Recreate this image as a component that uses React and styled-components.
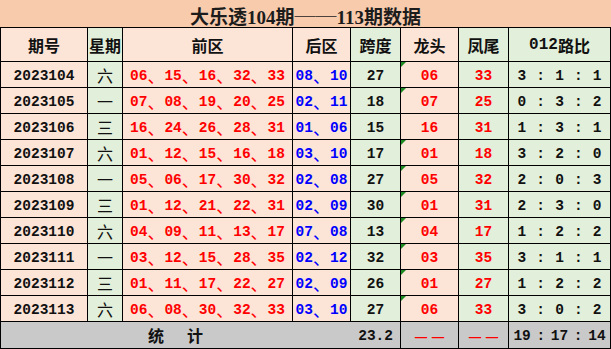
import React from "react";
import styled, { createGlobalStyle } from "styled-components";

const Global = createGlobalStyle`
  html, body { margin: 0; padding: 0; background: #fff; }
`;

const MONO = `"Liberation Mono", "Noto Sans CJK SC", monospace`;
const CJK = `"Noto Sans CJK SC", sans-serif`;

const tones = { pink: "#fce4d6", green: "#e2efda", gray: "#c9c9c9" };
const inks = { black: "#111", red: "#ff0000", blue: "#0000ff" };

const Page = styled.div`
  width: 611px;
`;

const Title = styled.div`
  box-sizing: border-box;
  height: 27px;
  padding-top: 3px;
  background: #f8cbad;
  display: flex;
  align-items: center;
  justify-content: center;
  font-family: "Liberation Serif", "Noto Sans CJK SC", serif;
  font-weight: bold;
  font-size: 19px;
  color: #1c1c1c;
  white-space: nowrap;
`;

const TitleDash = styled.span`
  font-family: ${CJK};
  font-weight: bold;
  font-size: 21px;
  line-height: 1;
`;

const Grid = styled.div`
  display: grid;
  grid-template-columns: 86px 34px 169px 57px 49px 57px 49px 101px;
  grid-template-rows: 33px repeat(10, 25px) 26px;
  gap: 1px;
  background: #000;
  border: 1px solid #000;
`;

const Cell = styled.div`
  position: relative;
  box-sizing: border-box;
  padding-top: 2px;
  background: ${(p) => tones[p.$tone || "pink"]};
  color: ${(p) => inks[p.$ink || "black"]};
  display: flex;
  align-items: center;
  justify-content: center;
  font-family: ${MONO};
  font-weight: bold;
  font-size: 14.5px;
  white-space: nowrap;
  overflow: hidden;
  ${(p) =>
    p.$flag &&
    `&::before {
      content: "";
      position: absolute;
      top: 0;
      left: 0;
      border-top: 5px solid #1f8b24;
      border-right: 5px solid transparent;
    }`}
`;

const HeadCell = styled(Cell)`
  padding-top: 0;
  font-family: ${MONO};
  font-size: 16px;
  font-weight: bold;
  color: #111;
`;

const HeadText = styled.span`
  font-family: ${CJK};
  font-weight: bold;
`;

const DayCell = styled(Cell)`
  font-family: ${CJK};
  font-weight: normal;
  font-size: 16px;
  padding-top: 0;
`;

const Sep = styled.span`
  font-family: ${CJK};
  font-size: 17px;
  font-weight: normal;
  line-height: 1;
`;

const Ratio = styled.span`
  display: flex;
  align-items: center;
`;

const Colon = styled.span`
  display: inline-block;
  width: ${(p) => p.$w}px;
  text-align: center;
`;

const StatsRow = styled.div`
  grid-column: 1 / 6;
  background: ${tones.gray};
  display: flex;
  font-family: ${MONO};
  font-weight: bold;
  font-size: 14.5px;
  color: #111;
`;

const StatsLabel = styled.div`
  width: 349px;
  display: flex;
  align-items: center;
  justify-content: center;
  gap: 23px;
  font-family: ${CJK};
  font-size: 16px;
  font-weight: bold;
`;

const StatsValue = styled.div`
  flex: 1;
  display: flex;
  align-items: center;
  justify-content: flex-end;
  padding: 2px 7px 0 0;
`;

const Dashes = styled.span`
  font-family: ${CJK};
  font-weight: normal;
  font-size: 17px;
  color: #ff0000;
`;

const rows = [
  ["2023104", "六", ["06", "15", "16", "32", "33"], ["08", "10"], "27", "06", "33", [3, 1, 1]],
  ["2023105", "一", ["07", "08", "19", "20", "25"], ["02", "11"], "18", "07", "25", [0, 3, 2]],
  ["2023106", "三", ["16", "24", "26", "28", "31"], ["01", "06"], "15", "16", "31", [1, 3, 1]],
  ["2023107", "六", ["01", "12", "15", "16", "18"], ["03", "10"], "17", "01", "18", [3, 2, 0]],
  ["2023108", "一", ["05", "06", "17", "30", "32"], ["02", "08"], "27", "05", "32", [2, 0, 3]],
  ["2023109", "三", ["01", "12", "21", "22", "31"], ["02", "09"], "30", "01", "31", [2, 3, 0]],
  ["2023110", "六", ["04", "09", "11", "13", "17"], ["07", "08"], "13", "04", "17", [1, 2, 2]],
  ["2023111", "一", ["03", "12", "15", "28", "35"], ["02", "12"], "32", "03", "35", [3, 1, 1]],
  ["2023112", "三", ["01", "11", "17", "22", "27"], ["02", "09"], "26", "01", "27", [1, 2, 2]],
  ["2023113", "六", ["06", "08", "30", "32", "33"], ["03", "10"], "27", "06", "33", [3, 0, 2]],
];

const Joined = ({ items }) =>
  items.map((n, i) => (
    <React.Fragment key={i}>
      {i > 0 && <Sep>、</Sep>}
      {n}
    </React.Fragment>
  ));

const RatioText = ({ parts, w }) => (
  <Ratio>
    {parts.map((n, i) => (
      <React.Fragment key={i}>
        {i > 0 && <Colon $w={w}>:</Colon>}
        <span>{n}</span>
      </React.Fragment>
    ))}
  </Ratio>
);

export default function App() {
  return (
    <Page>
      <Global />
      <Title>
        大乐透104期<TitleDash>──</TitleDash>113期数据
      </Title>
      <Grid>
        <HeadCell $tone="pink"><HeadText>期号</HeadText></HeadCell>
        <HeadCell $tone="green"><HeadText>星期</HeadText></HeadCell>
        <HeadCell $tone="pink"><HeadText>前区</HeadText></HeadCell>
        <HeadCell $tone="pink"><HeadText>后区</HeadText></HeadCell>
        <HeadCell $tone="green"><HeadText>跨度</HeadText></HeadCell>
        <HeadCell $tone="pink"><HeadText>龙头</HeadText></HeadCell>
        <HeadCell $tone="green"><HeadText>凤尾</HeadText></HeadCell>
        <HeadCell $tone="green">012<HeadText>路比</HeadText></HeadCell>

        {rows.map(([id, day, front, back, span, head, tail, ratio]) => (
          <React.Fragment key={id}>
            <Cell $tone="pink">{id}</Cell>
            <DayCell $tone="green">{day}</DayCell>
            <Cell $tone="pink" $ink="red"><Joined items={front} /></Cell>
            <Cell $tone="pink" $ink="blue"><Joined items={back} /></Cell>
            <Cell $tone="green">{span}</Cell>
            <Cell $tone="pink" $ink="red" $flag={id !== "2023106"}>{head}</Cell>
            <Cell $tone="green" $ink="red">{tail}</Cell>
            <Cell $tone="green"><RatioText parts={ratio} w={29} /></Cell>
          </React.Fragment>
        ))}

        <StatsRow>
          <StatsLabel>
            <span>统</span>
            <span>计</span>
          </StatsLabel>
          <StatsValue>23.2</StatsValue>
        </StatsRow>
        <Cell $tone="gray"><Dashes>－－</Dashes></Cell>
        <Cell $tone="gray"><Dashes>－－</Dashes></Cell>
        <Cell $tone="gray"><RatioText parts={[19, 17, 14]} w={20} /></Cell>
      </Grid>
    </Page>
  );
}
